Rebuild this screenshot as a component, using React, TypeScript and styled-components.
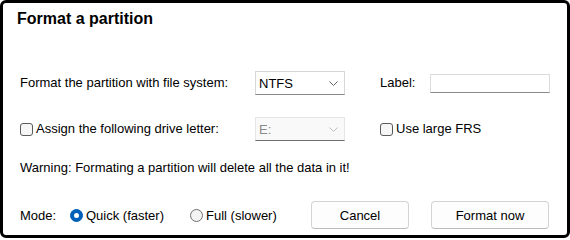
import React from "react";
import styled, { createGlobalStyle } from "styled-components";

const Global = createGlobalStyle`
  html, body { margin: 0; padding: 0; background: #ffffff; }
  body { font-family: "Liberation Sans", Arial, sans-serif; color: #000; }
  * { box-sizing: border-box; }
`;

const Dialog = styled.div`
  width: 570px;
  height: 238px;
  border: 3px solid #000;
  border-radius: 6px;
  background: #fff;
  padding: 6px 0 0 14px;
  display: flex;
  flex-direction: column;
`;

const Title = styled.h1`
  margin: 0;
  font-size: 16px;
  line-height: 20px;
  font-weight: bold;
`;

const Row = styled.div<{ $top: number }>`
  margin-top: ${(p) => p.$top}px;
  padding-left: 3px;
  display: grid;
  grid-template-columns: 235px 90px 35px 50px 120px;
  align-items: center;
  height: 24px;
  font-size: 13px;
`;

const Text = styled.span<{ $muted?: boolean }>`
  font-size: 13px;
  line-height: 20px;
  color: ${(p) => (p.$muted ? "#8a8a8a" : "#000")};
  white-space: nowrap;
`;

const Select = styled.div<{ $disabled?: boolean }>`
  height: 24px;
  border: 1px solid ${(p) => (p.$disabled ? "#e6e6e6" : "#d6d6d6")};
  border-bottom-color: ${(p) => (p.$disabled ? "#6e6e6e" : "#8a8a8a")};
  background: ${(p) => (p.$disabled ? "#f9f9f9" : "#fff")};
  color: ${(p) => (p.$disabled ? "#8a8a8a" : "#000")};
  display: flex;
  align-items: center;
  justify-content: space-between;
  padding: 0 6px 0 3px;
  font-size: 13px;
`;

const Input = styled.div`
  height: 19px;
  border: 1px solid #dcdcdc;
  border-bottom-color: #8a8a8a;
  background: #fff;
`;

const CheckLabel = styled.label<{ $span?: string }>`
  display: flex;
  align-items: center;
  gap: 3px;
  ${(p) => (p.$span ? `grid-column: ${p.$span};` : "")}
`;

const Box = styled.span`
  width: 13px;
  height: 13px;
  border: 1px solid #5a5a5a;
  border-radius: 3px;
  background: #f6f6f6;
  display: inline-block;
`;

const Warning = styled.div`
  margin-top: 17px;
  padding-left: 3px;
  font-size: 13px;
  line-height: 20px;
`;

const ModeRow = styled.div`
  margin-top: 23px;
  padding-left: 3px;
  height: 28px;
  display: flex;
  align-items: center;
  font-size: 13px;
`;

const ModeLabel = styled.span`
  width: 50px;
  font-size: 13px;
`;

const RadioLabel = styled.label<{ $w: number }>`
  width: ${(p) => p.$w}px;
  display: flex;
  align-items: center;
  gap: 3px;
  font-size: 13px;
`;

const Radio = styled.span<{ $on?: boolean }>`
  width: 13px;
  height: 13px;
  border-radius: 50%;
  display: inline-flex;
  align-items: center;
  justify-content: center;
  background: ${(p) => (p.$on ? "#005fb8" : "#f3f3f3")};
  border: 1px solid ${(p) => (p.$on ? "#005fb8" : "#6e6e6e")};
  &::after {
    content: "";
    display: ${(p) => (p.$on ? "block" : "none")};
    width: 5px;
    height: 5px;
    border-radius: 50%;
    background: #fff;
  }
`;

const Buttons = styled.div`
  margin-left: auto;
  margin-right: 18px;
  display: flex;
  gap: 22px;
`;

const Button = styled.button<{ $w: number }>`
  width: ${(p) => p.$w}px;
  height: 28px;
  border: 1px solid #d3d3d3;
  border-bottom-color: #bcbcbc;
  border-radius: 4px;
  background: #fdfdfd;
  font-family: "Liberation Sans", Arial, sans-serif;
  font-size: 13px;
  color: #000;
  padding: 0;
`;

const Chevron = ({ light }: { light?: boolean }) => (
  <svg width="9" height="5" viewBox="0 0 9 5">
    <path d="M0.5 0.5 L4.5 4.5 L8.5 0.5" fill="none" stroke={light ? "#bdbdbd" : "#606060"} strokeWidth="1" />
  </svg>
);

export default function App() {
  return (
    <>
      <Global />
      <Dialog>
        <Title>Format a partition</Title>
        <Row $top={42}>
          <Text>Format the partition with file system:</Text>
          <Select>
            <span>NTFS</span>
            <Chevron />
          </Select>
          <span />
          <Text>Label:</Text>
          <Input />
        </Row>
        <Row $top={22}>
          <CheckLabel>
            <Box />
            <Text>Assign the following drive letter:</Text>
          </CheckLabel>
          <Select $disabled>
            <span>E:</span>
            <Chevron light />
          </Select>
          <span />
          <CheckLabel $span="4 / 6">
            <Box />
            <Text>Use large FRS</Text>
          </CheckLabel>
        </Row>
        <Warning>Warning: Formating a partition will delete all the data in it!</Warning>
        <ModeRow>
          <ModeLabel>Mode:</ModeLabel>
          <RadioLabel $w={120}>
            <Radio $on />
            <span>Quick (faster)</span>
          </RadioLabel>
          <RadioLabel $w={100}>
            <Radio />
            <span>Full (slower)</span>
          </RadioLabel>
          <Buttons>
            <Button $w={98}>Cancel</Button>
            <Button $w={118}>Format now</Button>
          </Buttons>
        </ModeRow>
      </Dialog>
    </>
  );
}
